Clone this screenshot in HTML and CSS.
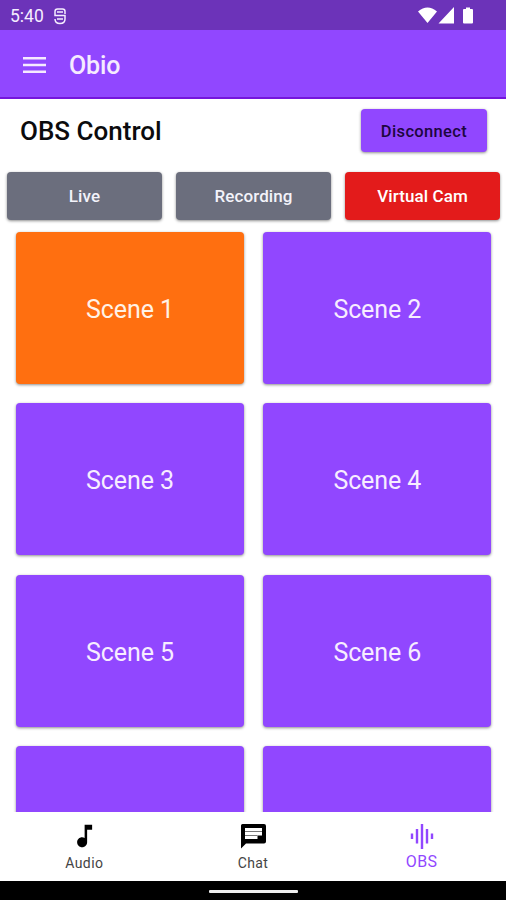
FILE: index.html
```html
<!DOCTYPE html>
<html lang="en">
<head>
<meta charset="utf-8">
<title>Obio</title>
<link rel="stylesheet" href="styles.css">
</head>
<body>
<div class="screen">
  <div class="status">
    <span class="time">5:40</span>
    <svg class="debug" width="12" height="17" viewBox="0 0 12 17" fill="none" stroke="currentColor" stroke-width="1.500"><path d="M11 6V3.500Q11 1 8.500 1H3.500Q1 1 1 3.500V7.500H11V11Q11 15.500 6 15.500Q1 15.500 1 11M3 4H9M3 11H9"/></svg>
    <svg class="signals" width="57" height="18" viewBox="0 0 57 18" fill="currentColor"><path d="M0 4.5Q9.500 -3.500 19 4.500L9.500 16ZM20.500 16.500L36 0V16.500ZM45 3Q45 2 46 2H48V.5H52V2H54Q55 2 55 3V15.500Q55 16.500 54 16.500H46Q45 16.500 45 15.500Z"/></svg>
  </div>
  <header class="appbar">
    <svg width="23" height="17" viewBox="0 0 23 17" fill="currentColor"><path d="M0 0H23V2.600H0ZM0 6.700H23V9.300H0ZM0 13.400H23V16H0Z"/></svg>
    <span class="brand">Obio</span>
  </header>
  <main class="content">
    <div class="heading"><h1>OBS Control</h1><button class="btn disconnect">Disconnect</button></div>
    <div class="actions"><button class="btn">Live</button><button class="btn">Recording</button><button class="btn active">Virtual Cam</button></div>
    <div class="scenes">
      <button class="scene current">Scene 1</button><button class="scene">Scene 2</button>
      <button class="scene">Scene 3</button><button class="scene">Scene 4</button>
      <button class="scene">Scene 5</button><button class="scene">Scene 6</button>
      <button class="scene"></button><button class="scene"></button>
    </div>
  </main>
  <nav class="tabs">
    <div class="tab"><svg width="30" height="30" viewBox="0 0 24 24" fill="currentColor"><path d="M12.500 3v10.550c-.59-.34-1.270-.55-2-.55-2.210 0-4 1.790-4 4s1.790 4 4 4 4-1.790 4-4V7h4V3h-6z"/></svg><span>Audio</span></div>
    <div class="tab"><svg width="30" height="30" viewBox="0 0 30 30"><path fill="currentColor" d="M4.500 3H26Q28 3 28 5V20.500Q28 22.500 26 22.500H8L3 27.500V4.500Q3 3 4.500 3Z"/><path fill="#fff" d="M7 7H24V14.500H19.500V18H7Z"/><path fill="none" stroke="#777" d="M7 10.500H24M7 14.500H19.500"/></svg><span>Chat</span></div>
    <div class="tab selected"><svg width="30" height="30" viewBox="0 0 30 30" fill="none" stroke="currentColor" stroke-width="2.400"><path d="M5 12.500V18M10 8V22.500M15 3V28M20 8V22.500M25 12.500V18"/></svg><span>OBS</span></div>
  </nav>
  <div class="gesture"><div class="handle"></div></div>
</div>
</body>
</html>
```
FILE: styles.css
```css
* { box-sizing: border-box; }
body { margin: 0; font-family: Roboto, "Liberation Sans", sans-serif; background: #fff; }
button { font-family: inherit; border: 0; padding: 0; }
.screen { width: 506px; height: 900px; display: flex; flex-direction: column; overflow: hidden; }
.status { height: 30px; flex: none; background: #6c33b9; color: #f5eeff; display: flex; align-items: center; padding: 2px 31px 0 10px; }
.time { font-size: 17.500px; line-height: 20px; }
.debug { margin-left: 10px; }
.signals { margin-left: auto; color: #fff; }
.appbar { height: 69px; flex: none; background: #9147ff; border-bottom: 2px solid #7516dc; color: #f5eaff; display: flex; align-items: center; gap: 23px; padding: 3px 24px 0 23px; }
.brand { font-size: 25px; font-weight: 500; line-height: 30px; letter-spacing: -.1px; padding-top: 2px; }
.content { height: 713px; flex: none; overflow: hidden; }
.heading { height: 73px; display: flex; justify-content: space-between; padding: 10px 19px 0 20px; }
h1 { margin: 7px 0 0; font-size: 26px; line-height: 30px; font-weight: 500; color: #0b0b0d; }
.btn { height: 48px; border-radius: 4px; background: #6b6e7d; color: #f3f3fa; font-size: 17px; font-weight: 500; box-shadow: 0 1px 3px rgba(0,0,0,.45); }
.disconnect { width: 126px; height: 43px; padding-top: 2px; background: #9147ff; color: #1d0640; font-size: 16.500px; letter-spacing: .35px; }
.actions { display: grid; grid-template-columns: repeat(3, 155px); gap: 14px; padding-left: 7px; }
.actions .btn { letter-spacing: .1px; }
.btn.active { background: #e31b1b; color: #fff; }
.scenes { display: grid; grid-template-columns: repeat(2, 228px); grid-auto-rows: 152px; gap: 19.300px; padding: 12px 15px 0 16px; }
.scene { border-radius: 4px; background: #9147ff; color: #f7edff; font-size: 25px; letter-spacing: -.1px; padding-top: 3px; box-shadow: 0 1px 3px rgba(0,0,0,.45); }
.current { background: #ff6f10; color: #fff2e7; }
.tabs { height: 69px; flex: none; display: grid; grid-template-columns: repeat(3, 1fr); background: #fff; color: #000; }
.tab { display: flex; flex-direction: column; align-items: center; padding-top: 9px; font-size: 14px; line-height: 18px; letter-spacing: .4px; }
.tab span { margin-top: 3px; color: #444; }
.tab.selected { font-size: 16px; color: #9147ff; }
.tab.selected span { color: #9147ff; margin-top: 2px; }
.gesture { height: 19px; background: #000; display: flex; justify-content: center; padding-top: 9px; }
.handle { width: 89px; height: 3px; border-radius: 1px; background: #eee; }
```
